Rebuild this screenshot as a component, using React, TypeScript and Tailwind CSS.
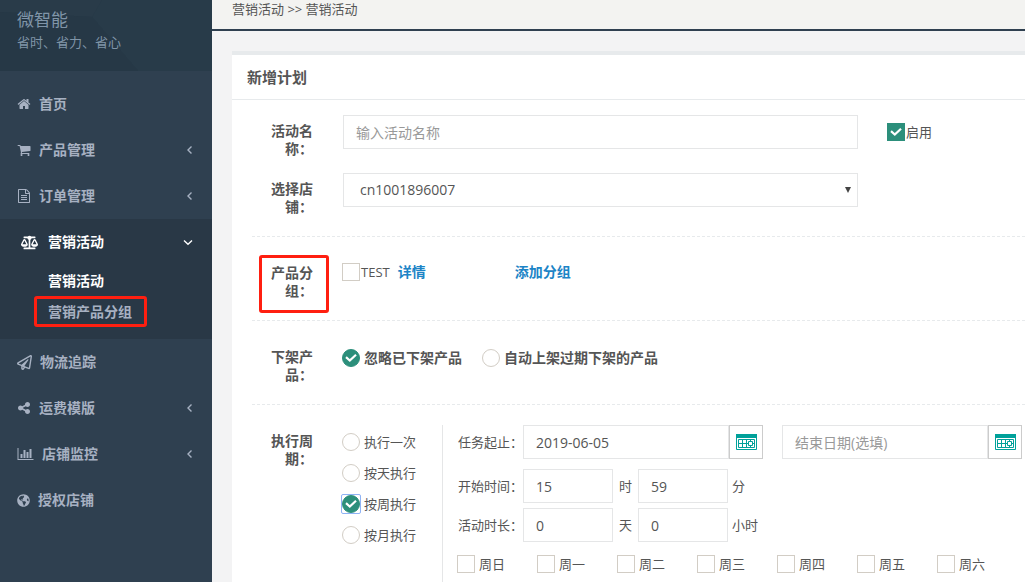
import { useState, type ReactNode } from "react"
import clsx from "clsx"
import { FaBalanceScale, FaGlobeAmericas, FaRegPaperPlane } from "react-icons/fa"

const ICON_PATHS = {
  home: "M1472 992v480q0 26-19 45t-45 19h-384v-384h-256v384h-384q-26 0-45-19t-19-45v-480q0-1 .5-3t.5-3l575-474 575 474q1 2 1 6zm223-69l-62 74q-8 9-21 11h-3q-13 0-21-7l-692-577-692 577q-12 8-24 7-13-2-21-11l-62-74q-8-10-7-23.5t11-21.5l719-599q32-26 76-26t76 26l244 204v-195q0-14 9-23t23-9h192q14 0 23 9t9 23v408l219 182q10 8 11 21.5t-7 23.5z",
  cart: "M704 1536q0 52-38 90t-90 38-90-38-38-90 38-90 90-38 90 38 38 90zm896 0q0 52-38 90t-90 38-90-38-38-90 38-90 90-38 90 38 38 90zm128-1088v512q0 24-16.5 42.5t-40.5 21.5l-1044 122q13 60 13 70 0 16-24 64h920q26 0 45 19t19 45-19 45-45 19h-1024q-26 0-45-19t-19-45q0-11 8-31.5t16-36 21.5-40 15.5-29.5l-177-823h-204q-26 0-45-19t-19-45 19-45 45-19h256q16 0 28.5 6.5t19.5 15.5 13 24.5 8 26 5.5 29.5 4.5 26h1201q26 0 45 19t19 45z",
  file: "M1596 380q28 28 48 76t20 88v1152q0 40-28 68t-68 28h-1344q-40 0-68-28t-28-68v-1600q0-40 28-68t68-28h896q40 0 88 20t76 48zm-444-244v376h376q-10-29-22-41l-313-313q-12-12-41-22zm384 1528v-1024h-416q-40 0-68-28t-28-68v-416h-768v1536h1280zm-1024-864q0-14 9-23t23-9h704q14 0 23 9t9 23v64q0 14-9 23t-23 9h-704q-14 0-23-9t-9-23v-64zm736 224q14 0 23 9t9 23v64q0 14-9 23t-23 9h-704q-14 0-23-9t-9-23v-64q0-14 9-23t23-9h704zm0 256q14 0 23 9t9 23v64q0 14-9 23t-23 9h-704q-14 0-23-9t-9-23v-64q0-14 9-23t23-9h704z",
  share: "M1344 1024q133 0 226.5 93.5t93.5 226.5-93.5 226.5-226.5 93.5-226.5-93.5-93.5-226.5q0-12 2-34l-360-180q-92 86-218 86-133 0-226.5-93.5t-93.5-226.5 93.5-226.5 226.5-93.5q126 0 218 86l360-180q-2-22-2-34 0-133 93.5-226.5t226.5-93.5 226.5 93.5 93.5 226.5-93.5 226.5-226.5 93.5q-126 0-218-86l-360 180q2 22 2 34t-2 34l360 180q92-86 218-86z",
}

function PathIcon({ d }: { d: string }) {
  return (
    <svg viewBox="0 0 1792 1792" className="size-[14px]" fill="currentColor" aria-hidden="true">
      <path d={d} />
    </svg>
  )
}

function ChartIcon() {
  return (
    <svg viewBox="0 0 2048 1792" className="h-[14px] w-[17px]" fill="currentColor" aria-hidden="true">
      <path d="M640 896v512H384V896h256zm384-512v1024H768V384h256zm1024 1152v128H0V128h128v1408h1920zM1408 640v768h-256V640h256zm384-384v1152h-256V256h256z" />
    </svg>
  )
}

function Chevron({ open }: { open?: boolean }) {
  return (
    <svg viewBox="0 0 10 10" className="size-[10px]" fill="none" stroke="currentColor" strokeWidth="1.4" aria-hidden="true">
      <path d={open ? "M1 3.5 5 7.2 9 3.5" : "M6.5 1.5 3 5l3.5 3.5"} />
    </svg>
  )
}

function CalendarIcon() {
  return (
    <svg width="22" height="16" viewBox="-1 0 22 16" fill="none" stroke="#00a19a" aria-hidden="true">
      <path d="M.5.5h20v15H.5z" />
      <path d="M0 0h21v4H0z" fill="#00a19a" stroke="none" />
      <path d="M2.5 5.500h16v8h-16zM6.500 5v9M10.500 5v9M2 9.500h10M14.500 5v9M16 9.500h3" />
      <path d="M12.500 7.500h4v4h-4z" fill="#fff" />
    </svg>
  )
}

interface NavEntry {
  name: string
  icon: ReactNode
  arrow?: boolean
}

const topLinks: NavEntry[] = [
  { name: "首页", icon: <PathIcon d={ICON_PATHS.home} /> },
  { name: "产品管理", icon: <PathIcon d={ICON_PATHS.cart} />, arrow: true },
  { name: "订单管理", icon: <PathIcon d={ICON_PATHS.file} />, arrow: true },
]

const bottomLinks: NavEntry[] = [
  { name: "物流追踪", icon: <FaRegPaperPlane className="size-[15px]" /> },
  { name: "运费模版", icon: <PathIcon d={ICON_PATHS.share} />, arrow: true },
  { name: "店铺监控", icon: <ChartIcon />, arrow: true },
  { name: "授权店铺", icon: <FaGlobeAmericas className="size-[13px]" /> },
]

function NavLink({ link }: { link: NavEntry }) {
  return (
    <a href="#" className="flex h-[46px] items-center gap-2 pr-[17px] pl-[17px]">
      {link.icon}
      <span className="flex-1">{link.name}</span>
      {link.arrow && <Chevron />}
    </a>
  )
}

function Sidebar() {
  return (
    <aside className="flex w-[212px] shrink-0 flex-col bg-[#2f4050] text-sm font-bold text-[#a7b1c2]">
      <div className="relative h-[71px] overflow-hidden bg-[#263947] px-[17px] pt-[10px] font-normal text-[#8095a8]">
        <svg className="absolute inset-0 size-full" viewBox="0 0 212 71" preserveAspectRatio="none" aria-hidden="true">
          <path d="M0 12 92 17 102 0H0z" fill="#293b49" />
          <path d="M92 17 102 0h110v71h-74z" fill="#283b49" />
          <path d="M0 12 92 17 138 71H0z" fill="#263846" />
        </svg>
        <div className="relative text-[17px] leading-5">微智能</div>
        <div className="relative text-[13px] leading-6">省时、省力、省心</div>
      </div>
      <nav className="pt-[10px]">
        {topLinks.map((link) => (
          <NavLink key={link.name} link={link} />
        ))}
        <div className="h-[120px] bg-[#293846] text-white">
          <a href="#" className="flex h-[46px] items-center gap-[10px] pr-[19px] pl-[21px]">
            <FaBalanceScale className="size-[17px]" />
            <span className="flex-1">营销活动</span>
            <Chevron open />
          </a>
          <a href="#" className="flex h-[31px] items-center pl-12">
            营销活动
          </a>
          <a
            href="#"
            className="ml-[34px] flex h-[31px] w-[113px] items-center rounded-[3px] border-3 border-[#ff1f10] pl-[11px] text-[#a7b1c2]"
          >
            营销产品分组
          </a>
        </div>
        {bottomLinks.map((link) => (
          <NavLink key={link.name} link={link} />
        ))}
      </nav>
    </aside>
  )
}

interface TickProps {
  label: string
  type?: "checkbox" | "radio"
  name?: string
  checked?: boolean
  focused?: boolean
  className?: string
  onChange?: () => void
}

function Tick({ label, type = "checkbox", name, checked = false, focused, className, onChange }: TickProps) {
  return (
    <label className={clsx("flex items-center whitespace-nowrap", className)}>
      <span className={clsx("grid size-[18px] shrink-0", focused && "rounded-[1px] outline-1 outline-[#8fb3f5]")}>
        <input
          type={type}
          name={name}
          checked={checked}
          onChange={onChange}
          className={clsx(
            "col-start-1 row-start-1 size-[18px] appearance-none border border-[#d2cdc5] bg-white checked:border-[#2c8f7b] checked:bg-[#2c8f7b]",
            type === "radio" && "rounded-full",
          )}
        />
        {checked && (
          <svg viewBox="0 0 18 18" className="pointer-events-none col-start-1 row-start-1 size-[18px]" fill="none" stroke="#fff" strokeWidth="2.200">
            <path d="M4 8.200 7.800 11.500 14 5.700" />
          </svg>
        )}
      </span>
      {label}
    </label>
  )
}

function FieldLabel({ first, second, marked, htmlFor }: { first: string; second: string; marked?: boolean; htmlFor?: string }) {
  return (
    <div className="w-[97px] shrink-0 pl-[27px]">
      <label
        htmlFor={htmlFor}
        className={clsx(
          "flex w-[70px] flex-col border-3 pr-[13px] text-right text-sm leading-[18px] font-bold",
          marked ? "h-[58px] rounded-[3px] border-[#ff1f10] pt-[6px]" : "border-transparent pt-1",
        )}
      >
        <span>{first}</span>
        <span>{second}</span>
      </label>
    </div>
  )
}

const inputClass = "h-[34px] border border-[#e5e6e7] bg-white text-sm outline-none placeholder:text-[#999]"

function DateField({ label, value, placeholder }: { label: string; value?: string; placeholder?: string }) {
  return (
    <div className="flex w-60">
      <input aria-label={label} defaultValue={value} placeholder={placeholder} className={clsx(inputClass, "min-w-0 flex-1 px-3")} />
      <button type="button" aria-label={label} className="grid h-[34px] w-[34px] shrink-0 place-items-center border border-[#ccc] bg-white">
        <CalendarIcon />
      </button>
    </div>
  )
}

function NumberRow({ title, first, firstUnit, second, secondUnit }: { title: string; first: string; firstUnit: string; second: string; secondUnit: string }) {
  return (
    <div className="flex items-center">
      <span className="w-[65px] shrink-0 whitespace-nowrap">{title}</span>
      <input aria-label={title + firstUnit} defaultValue={first} className={clsx(inputClass, "w-[90px] px-3")} />
      <span className="w-[25px] text-center">{firstUnit}</span>
      <input aria-label={title + secondUnit} defaultValue={second} className={clsx(inputClass, "w-[90px] px-3")} />
      <span className="pl-1">{secondUnit}</span>
    </div>
  )
}

const cycles = ["执行一次", "按天执行", "按周执行", "按月执行"]
const weekdays = ["周日", "周一", "周二", "周三", "周四", "周五", "周六"]

function PlanForm() {
  const [enabled, setEnabled] = useState(true)
  const [group, setGroup] = useState(false)
  const [offShelf, setOffShelf] = useState("ignore")
  const [cycle, setCycle] = useState("按周执行")
  const [days, setDays] = useState<string[]>([])

  const toggleDay = (day: string) => {
    setDays(days.includes(day) ? days.filter((d) => d !== day) : [...days, day])
  }

  return (
    <form className="flex flex-1 flex-col">
      <div className="flex pt-[15px]">
        <FieldLabel htmlFor="plan-name" first="活动名" second="称：" />
        <input id="plan-name" placeholder="输入活动名称" className={clsx(inputClass, "ml-[14px] w-[515px] px-3")} />
        <Tick label="启用" checked={enabled} onChange={() => setEnabled(!enabled)} className="ml-[29px] h-[34px] gap-px" />
      </div>

      <div className="flex pt-3">
        <FieldLabel htmlFor="shop" first="选择店" second="铺：" />
        <div className="ml-[14px] grid h-[34px] w-[515px]">
          <select id="shop" className={clsx(inputClass, "col-start-1 row-start-1 appearance-none px-4")}>
            <option>cn1001896007</option>
          </select>
          <svg
            viewBox="0 0 6 6"
            className="pointer-events-none col-start-1 row-start-1 mr-[7px] size-[6px] self-center justify-self-end"
            fill="#444"
            aria-hidden="true"
          >
            <path d="M0 0h6L3 6z" />
          </svg>
        </div>
      </div>

      <hr className="mt-[17px] ml-5 border-dashed border-[#e7eaec]" />

      <div className="flex pt-[18px]">
        <FieldLabel first="产品分" second="组：" marked />
        <div className="flex h-[34px] items-center pl-[13px]">
          <Tick label="TEST" checked={group} onChange={() => setGroup(!group)} className="gap-px" />
          <a href="#" className="pl-2 text-sm font-bold text-[#1c84c6]">
            详情
          </a>
          <a href="#" className="pl-[89px] text-sm font-bold text-[#1c84c6]">
            添加分组
          </a>
        </div>
      </div>

      <hr className="mt-[7px] ml-5 border-dashed border-[#e7eaec]" />

      <div className="flex pt-5">
        <FieldLabel first="下架产" second="品：" />
        <div className="flex h-[34px] items-center gap-5 pl-[13px] text-sm font-bold">
          <Tick type="radio" name="shelf" label="忽略已下架产品" checked={offShelf === "ignore"} onChange={() => setOffShelf("ignore")} className="gap-1" />
          <Tick type="radio" name="shelf" label="自动上架过期下架的产品" checked={offShelf === "auto"} onChange={() => setOffShelf("auto")} className="gap-1" />
        </div>
      </div>

      <hr className="mt-[17px] ml-5 border-dashed border-[#e7eaec]" />

      <div className="flex flex-1 pt-5">
        <FieldLabel first="执行周" second="期：" />
        <div className="flex w-[113px] shrink-0 flex-col gap-[13px] pt-2 pl-[13px]">
          {cycles.map((name) => (
            <Tick
              key={name}
              type="radio"
              name="cycle"
              label={name}
              checked={cycle === name}
              focused={cycle === name}
              onChange={() => setCycle(name)}
              className="gap-1"
            />
          ))}
        </div>
        <div className="min-w-0 flex-1 border-l border-[#e5e6e7] pl-[15px]">
          <div className="flex items-center">
            <span className="w-[65px] shrink-0 whitespace-nowrap">任务起止：</span>
            <div className="flex gap-[19px]">
              <DateField label="开始日期" value="2019-06-05" />
              <DateField label="结束日期" placeholder="结束日期(选填)" />
            </div>
          </div>
          <div className="flex flex-col gap-[5px] pt-[10px]">
            <NumberRow title="开始时间：" first="15" firstUnit="时" second="59" secondUnit="分" />
            <NumberRow title="活动时长：" first="0" firstUnit="天" second="0" secondUnit="小时" />
          </div>
          <div className="-ml-px flex pt-[13px]">
            {weekdays.map((day) => (
              <Tick key={day} label={day} checked={days.includes(day)} onChange={() => toggleDay(day)} className="w-20 gap-1" />
            ))}
          </div>
        </div>
      </div>
    </form>
  )
}

export default function App() {
  return (
    <div className="flex min-h-screen bg-[#f3f3f4] font-['Open_Sans','Noto_Sans_CJK_SC',sans-serif] text-[13px] leading-[18px] text-[#555]">
      <Sidebar />
      <main className="flex min-w-0 flex-1 flex-col overflow-x-clip">
        <div className="h-[31px] border-b-2 border-[#2f4050] bg-[#f3f3f1] pl-5">营销活动 &gt;&gt; 营销活动</div>
        <section className="mt-5 ml-5 flex flex-1 flex-col border-t-4 border-[#e7eaec] bg-white">
          <h1 className="flex h-[45px] items-center border-b border-[#e7eaec] pl-[15px] text-[15px] font-bold">新增计划</h1>
          <PlanForm />
        </section>
      </main>
    </div>
  )
}
